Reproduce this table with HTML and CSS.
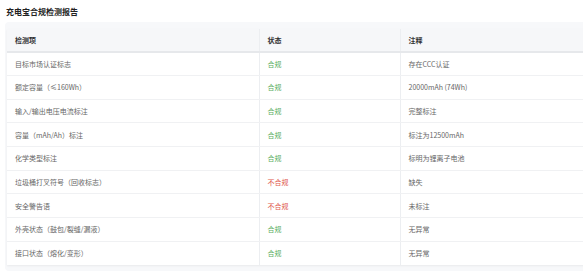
FILE: index.html
```html
<!DOCTYPE html>
<html lang="zh-CN">
<head>
  <meta charset="UTF-8" />
  <title>充电宝合规检测报告</title>
  <link rel="stylesheet" href="styles.css">
</head>
<body>

  <h2 class="report-title">充电宝合规检测报告</h2>

  <div class="report-wrap">
    <table class="report-table">
      <thead>
        <tr>
          <th class="col-item">检测项</th>
          <th class="col-state">状态</th>
          <th class="col-note">注释</th>
        </tr>
      </thead>
      <tbody>
        <tr><td>目标市场认证标志</td><td class="ok">合规</td><td>存在CCC认证</td></tr>
        <tr><td>额定容量（≤160Wh）</td><td class="ok">合规</td><td>20000mAh (74Wh)</td></tr>
        <tr><td>输入/输出电压电流标注</td><td class="ok">合规</td><td>完整标注</td></tr>
        <tr><td>容量（mAh/Ah）标注</td><td class="ok">合规</td><td>标注为12500mAh</td></tr>
        <tr><td>化学类型标注</td><td class="ok">合规</td><td>标明为锂离子电池</td></tr>
        <tr><td>垃圾桶打叉符号（回收标志）</td><td class="bad">不合规</td><td>缺失</td></tr>
        <tr><td>安全警告语</td><td class="bad">不合规</td><td>未标注</td></tr>
        <tr><td>外壳状态（鼓包/裂缝/漏液）</td><td class="ok">合规</td><td>无异常</td></tr>
        <tr><td>接口状态（熔化/变形）</td><td class="ok">合规</td><td>无异常</td></tr>
      </tbody>
    </table>
  </div>

</body>
</html>
```

FILE: styles.css
```css
* {
  box-sizing: border-box;
}

body {
  margin: 0;
  padding: 0;
  background: #fff;
  color: #666;
  font-family: "Noto Sans CJK SC", "Noto Sans", sans-serif;
  overflow: hidden;
}

.report-title {
  margin: 0;
  padding: 6px 6px 0;
  height: 22px;
  font-size: 8px;
  line-height: 11px;
  font-weight: 700;
  color: #222;
}

.report-wrap {
  margin-left: 5px;
  width: 578px;
  overflow: hidden;
  padding: 7px 0 6px 2px;
  background: #f7f8fa;
  border-radius: 4px 0 0 4px;
}

.report-table {
  width: 630px;
  border-collapse: collapse;
  background: #fff;
  box-shadow: 0 1px 2px rgba(0, 0, 0, 0.06);
  font-size: 7px;
  table-layout: fixed;
}

.report-table th,
.report-table td {
  padding: 0 8px;
  text-align: left;
  white-space: nowrap;
}

.report-table th {
  height: 23px;
  background: #f6f7f9;
  color: #333;
  font-weight: 700;
  border-bottom: 2px solid #e6e8eb;
}

.report-table td {
  height: 23.67px;
  border-bottom: 1px solid #f0f1f3;
}

.report-table tbody tr:last-child td {
  border-bottom: none;
}

.report-table th + th,
.report-table td + td {
  border-left: 1px solid #eceef1;
}

.col-item {
  width: 252px;
}

.col-state {
  width: 141px;
}

.report-table td.ok {
  color: #5aae5e;
}

.report-table td.bad {
  color: #e0574c;
}
```
